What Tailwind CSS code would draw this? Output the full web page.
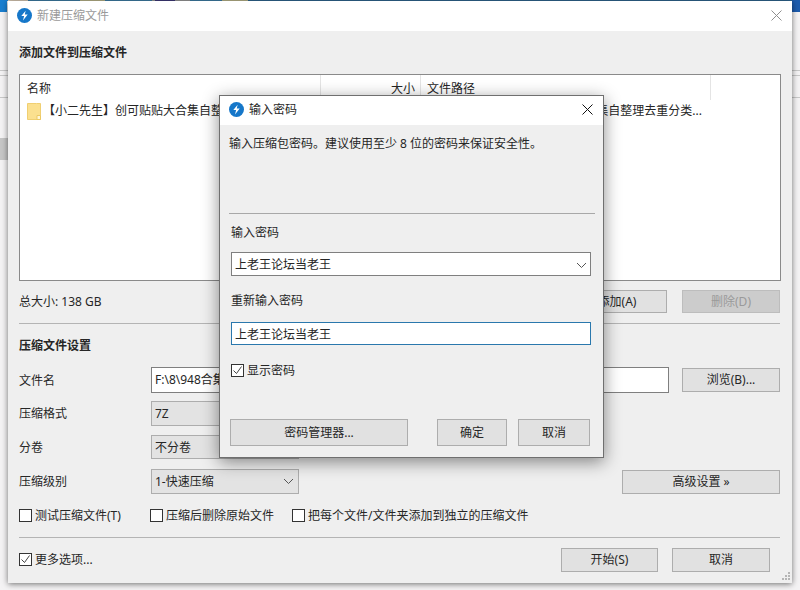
<!DOCTYPE html>
<html lang="zh">
<head>
<meta charset="utf-8">
<script src="https://cdn.jsdelivr.net/npm/@tailwindcss/browser@4"></script>
<title>新建压缩文件</title>
</head>
<body class="m-0">
<div class="relative w-[800px] h-[590px] overflow-hidden bg-[#f4f3f4] text-[12px] leading-[20px] text-[#262626] font-['Noto_Sans','Noto_Sans_CJK_SC',sans-serif]">

  <!-- desktop behind the window -->
  <div class="absolute left-0 top-0 w-full h-[1px] flex">
    <div class="w-[8px] bg-[#1a7fd0]"></div><div class="w-[20px] bg-[#d9c9b4]"></div><div class="w-[52px] bg-[#3e7ea6]"></div><div class="w-[25px] bg-[#b9b48a]"></div><div class="w-[47px] bg-[#3e7ea6]"></div><div class="w-[3px] bg-[#999]"></div><div class="w-[20px] bg-[#3f3a7a]"></div><div class="w-[15px] bg-[#9a9a9a]"></div><div class="w-[32px] bg-[#3e7ea6]"></div><div class="w-[26px] bg-[#b9b48a]"></div><div class="flex-1 bg-[#2f6690]"></div>
  </div>
  <div class="absolute left-0 top-0 w-[7px] h-[12px] bg-[#1a7fd0]"></div>
  <div class="absolute right-0 top-0 w-[8px] h-[12px] bg-[#1c5cae]"></div>
  <div class="absolute left-0 top-[70px] w-full h-[1px] bg-[#c8c8c8]"></div>
  <div class="absolute left-0 top-[75px] w-full h-[1px] bg-[#c8c8c8]"></div>
  <div class="absolute left-0 top-[97px] w-full h-[1px] bg-[#c8c8c8]"></div>
  <div class="absolute left-0 top-[138px] w-[8px] h-[22px] bg-[#c6c6c6]"></div>

  <!-- main window -->
  <div class="absolute left-[8px] top-[1px] w-[784px] h-[582px] bg-[#efefef] shadow-[0_1px_6px_rgba(0,0,0,0.55)]">
    <div class="h-[30px] bg-white flex items-center pl-[9px] pr-[10px] pb-[1px]">
      <svg class="w-[15px] h-[15px] shrink-0" viewBox="0 0 16 16"><circle cx="8" cy="8" r="8" fill="#1677c9"/><path d="M9.2 2.8 4.6 8.6h3L6.4 13.2 11.4 7H8.3z" fill="#fff"/></svg>
      <span class="ml-[5px] text-[#9a9a9a]">新建压缩文件</span>
      <svg class="ml-auto w-[11px] h-[11px] mb-[1px]" viewBox="0 0 11 11"><path d="M.5.5l10 10M10.5.5l-10 10" stroke="#8f8f8f" fill="none"/></svg>
    </div>

    <div class="px-[11px]">
      <div class="mt-[11px] h-[20px] pt-[1px] font-bold">添加文件到压缩文件</div>

      <div class="mt-[12px] h-[207px] bg-white border border-[#8a8a8a]">
        <div class="flex h-[25px] items-center">
          <div class="w-[301px] h-full pl-[7px] pt-[2px] flex items-center border-r border-[#e4e4e4]">名称</div>
          <div class="w-[100px] h-full pr-[5px] pt-[2px] flex items-center justify-end border-r border-[#e4e4e4]">大小</div>
          <div class="w-[290px] h-full pl-[6px] pt-[2px] flex items-center border-r border-[#e4e4e4]">文件路径</div>
        </div>
        <div class="flex h-[22px] items-center">
          <div class="w-[301px] pl-[7px] flex items-center overflow-hidden whitespace-nowrap">
            <svg class="w-[14px] h-[17px] shrink-0" viewBox="0 0 14 17"><path d="M.5.5h9l4 0v16H.5z" fill="#fbe08f" stroke="#f0cf72"/><path d="M10 12.5h3.5v4H10z" fill="#fff6d6" stroke="#ecc964"/></svg>
            <span class="ml-[2px]">【小二先生】创可贴贴大合集自整理去重分类...</span>
          </div>
          <div class="w-[100px]"></div>
          <div class="w-[288px] ml-[-7px] flex justify-end overflow-hidden whitespace-nowrap">F:\8\【小二先生】创可贴贴大合集自整理去重分类...</div>
        </div>
      </div>

      <div class="mt-[9px] h-[23px] flex items-center">
        <span>总大小: 138 GB</span>
        <button class="ml-auto w-[100px] h-[23px] bg-[#e1e1e1] border border-[#adadad]">添加(A)</button>
        <button class="ml-[15px] mr-[1px] w-[98px] h-[23px] bg-[#cccccc] border border-[#bdbdbd] text-[#9a9a9a]">删除(D)</button>
      </div>

      <div class="mt-[10px] mr-[1px] h-[1px] bg-[#b4b4b4]"></div>

      <div class="mt-[11px] h-[20px] pt-[1px] font-bold">压缩文件设置</div>

      <div class="mt-[12px] h-[26px] flex items-center">
        <span class="w-[132px] pt-[2px]">文件名</span>
        <div class="w-[518px] h-[26px] bg-white border border-[#7f7f7f] pl-[3px] flex items-center">F:\8\948合集.7z</div>
        <button class="ml-[13px] w-[98px] h-[24px] bg-[#e1e1e1] border border-[#adadad]">浏览(B)...</button>
      </div>

      <div class="mt-[8px] h-[25px] flex items-center">
        <span class="w-[132px]">压缩格式</span>
        <div class="w-[148px] h-[25px] bg-[#e3e3e3] border border-[#adadad] pl-[3px] flex items-center justify-between pr-[4px]">7Z
          <svg class="w-[11px] h-[7px]" viewBox="0 0 11 7"><path d="M1 1l4.5 4.5L10 1" fill="none" stroke="#555"/></svg>
        </div>
      </div>

      <div class="mt-[9px] h-[24px] flex items-center">
        <span class="w-[132px] pt-[2px]">分卷</span>
        <div class="w-[148px] h-[24px] bg-[#e3e3e3] border border-[#adadad] pl-[3px] pt-[2px] flex items-center justify-between pr-[4px]">不分卷
          <svg class="w-[11px] h-[7px]" viewBox="0 0 11 7"><path d="M1 1l4.5 4.5L10 1" fill="none" stroke="#555"/></svg>
        </div>
      </div>

      <div class="mt-[10px] h-[25px] flex items-center">
        <span class="w-[132px]">压缩级别</span>
        <div class="w-[148px] h-[25px] bg-[#e3e3e3] border border-[#adadad] pl-[3px] flex items-center justify-between pr-[4px]">1-快速压缩
          <svg class="w-[11px] h-[7px]" viewBox="0 0 11 7"><path d="M1 1l4.5 4.5L10 1" fill="none" stroke="#555"/></svg>
        </div>
        <button class="ml-auto mr-[1px] w-[158px] h-[24px] bg-[#e1e1e1] border border-[#adadad]">高级设置 »</button>
      </div>

      <div class="mt-[11px] h-[20px] flex items-center">
        <span class="w-[13px] h-[13px] bg-white border border-[#333] shrink-0"></span>
        <span class="ml-[3px] w-[115px] pt-[2px]">测试压缩文件(T)</span>
        <span class="w-[13px] h-[13px] bg-white border border-[#333] shrink-0"></span>
        <span class="ml-[3px] w-[126px] pt-[2px]">压缩后删除原始文件</span>
        <span class="w-[13px] h-[13px] bg-white border border-[#333] shrink-0"></span>
        <span class="ml-[3px] pt-[2px]">把每个文件/文件夹添加到独立的压缩文件</span>
      </div>

      <div class="mt-[12px] mr-[1px] h-[1px] bg-[#b4b4b4]"></div>

      <div class="mt-[10px] h-[24px] flex items-center">
        <span class="w-[13px] h-[13px] mb-[2px] bg-white border border-[#333] shrink-0 flex items-center justify-center">
          <svg class="w-[11px] h-[11px]" viewBox="0 0 11 11"><path d="M1.5 5.5l3 3 5-7" fill="none" stroke="#444"/></svg>
        </span>
        <span class="ml-[3px]">更多选项...</span>
        <button class="ml-auto w-[97px] h-[24px] bg-[#e1e1e1] border border-[#adadad]">开始(S)</button>
        <button class="ml-[14px] mr-[11px] w-[98px] h-[24px] bg-[#e1e1e1] border border-[#adadad]">取消</button>
      </div>
    </div>

    <!-- size grip -->
    <svg class="absolute right-[2px] bottom-[3px] w-[8px] h-[8px]" viewBox="0 0 8 8"><path d="M6 0h2v2H6zM3 3h2v2H3zM6 3h2v2H6zM0 6h2v2H0zM3 6h2v2H3zM6 6h2v2H6z" fill="#b5b5b5"/></svg>

    <!-- password dialog -->
    <div class="absolute left-[211px] top-[94px] w-[385px] h-[363px] bg-[#efefef] border border-[#6f6f6f] shadow-[0_4px_16px_rgba(0,0,0,0.45)]">
      <div class="h-[29px] bg-white flex items-center pl-[9px] pr-[10px] pb-[2px]">
        <svg class="w-[15px] h-[15px] shrink-0" viewBox="0 0 16 16"><circle cx="8" cy="8" r="8" fill="#1677c9"/><path d="M9.2 2.8 4.6 8.6h3L6.4 13.2 11.4 7H8.3z" fill="#fff"/></svg>
        <span class="ml-[5px]">输入密码</span>
        <svg class="ml-auto w-[11px] h-[11px]" viewBox="0 0 11 11"><path d="M.5.5l10 10M10.5.5l-10 10" stroke="#111" fill="none"/></svg>
      </div>
      <div class="pl-[9px] pr-[8px]">
        <div class="mt-[8px] h-[20px] pt-[1px]">输入压缩包密码。建议使用至少 8 位的密码来保证安全性。</div>
        <div class="mt-[60px] h-[1px] bg-[#a8a8a8]"></div>
        <div class="mt-[8px] h-[20px] pt-[1px] ml-[2px]">输入密码</div>
        <div class="mt-[10px] ml-[2px] w-[360px] h-[24px] bg-white border border-[#7f7f7f] pl-[3px] pr-[3px] pt-[2px] flex items-center justify-between">上老王论坛当老王
          <svg class="w-[11px] h-[7px]" viewBox="0 0 11 7"><path d="M1 1l4.5 4.5L10 1" fill="none" stroke="#555"/></svg>
        </div>
        <div class="mt-[14px] h-[20px] pt-[1px] ml-[2px]">重新输入密码</div>
        <div class="mt-[12px] ml-[2px] w-[360px] h-[23px] bg-white border border-[#2a78ad] pl-[3px] pt-[2px] flex items-center">上老王论坛当老王</div>
        <div class="mt-[15px] h-[20px] ml-[2px] flex items-center">
          <span class="w-[13px] h-[13px] bg-white border border-[#333] shrink-0 flex items-center justify-center">
            <svg class="w-[11px] h-[11px]" viewBox="0 0 11 11"><path d="M1.5 5.5l3 3 5-7" fill="none" stroke="#444"/></svg>
          </span>
          <span class="ml-[3px] pt-[2px]">显示密码</span>
        </div>
        <div class="mt-[39px] h-[27px] ml-[1px] flex">
          <button class="w-[178px] h-[27px] bg-[#e1e1e1] border border-[#adadad]">密码管理器...</button>
          <button class="ml-[29px] w-[70px] h-[27px] bg-[#e1e1e1] border border-[#adadad]">确定</button>
          <button class="ml-[11px] w-[72px] h-[27px] bg-[#e1e1e1] border border-[#adadad]">取消</button>
        </div>
      </div>
    </div>
  </div>
</div>
</body>
</html>
